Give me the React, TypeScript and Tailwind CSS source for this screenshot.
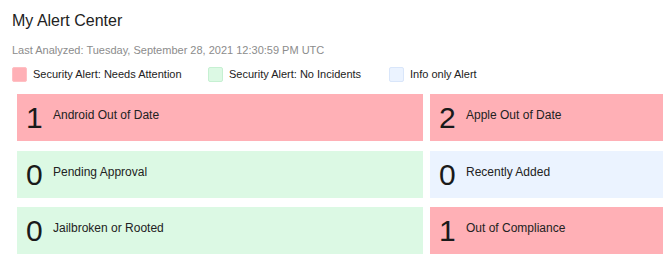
const legend = [
  { label: "Security Alert: Needs Attention", swatch: "bg-[#ffb0b6] border-[#ffc0c4]" },
  { label: "Security Alert: No Incidents", swatch: "bg-[#dcf9e4] border-[#c6f0d2]" },
  { label: "Info only Alert", swatch: "bg-[#ebf3ff] border-[#d9e6fa]" },
];

const tones = {
  alert: "bg-[#ffb0b6]",
  ok: "bg-[#dcf9e4]",
  info: "bg-[#ebf3ff]",
} as const;

const cards: { count: number; label: string; tone: keyof typeof tones }[] = [
  { count: 1, label: "Android Out of Date", tone: "alert" },
  { count: 2, label: "Apple Out of Date", tone: "alert" },
  { count: 0, label: "Pending Approval", tone: "ok" },
  { count: 0, label: "Recently Added", tone: "info" },
  { count: 0, label: "Jailbroken or Rooted", tone: "ok" },
  { count: 1, label: "Out of Compliance", tone: "alert" },
];

function AlertCard({ count, label, tone }: (typeof cards)[number]) {
  return (
    <div className={`flex items-start h-[47px] pl-[9px] pt-[9px] ${tones[tone]}`}>
      <span className="w-[17px] mr-[10px] text-[30px] leading-[30px] text-[#1a1a1a]">{count}</span>
      <span className="mt-[5px] text-[12px] leading-[14px] text-[#222]">{label}</span>
    </div>
  );
}

export default function App() {
  return (
    <div className="w-[663px] h-[259px] overflow-hidden bg-white font-['Liberation_Sans',Arial,sans-serif] pl-[12px] pt-[12px]">
      <h1 className="text-[16px] leading-[18px] text-[#222]">My Alert Center</h1>
      <p className="mt-[14px] text-[11px] leading-[13px] text-[#8c8c8c]">
        Last Analyzed: Tuesday, September 28, 2021 12:30:59 PM UTC
      </p>
      <div className="mt-[10px] flex items-center h-[15px] text-[11px] text-[#222]">
        {legend.map((l, i) => (
          <div key={l.label} className={`flex items-center ${i === 0 ? "w-[196px]" : i === 1 ? "w-[181px]" : ""}`}>
            <span className={`w-[15px] h-[15px] rounded-[2px] border ${l.swatch}`} />
            <span className="ml-[6px]">{l.label}</span>
          </div>
        ))}
      </div>
      <div className="mt-[12px] ml-[5px] grid grid-cols-[406px_240px] gap-x-[7px] gap-y-[9.5px]">
        {cards.map((c) => (
          <AlertCard key={c.label} {...c} />
        ))}
      </div>
    </div>
  );
}
